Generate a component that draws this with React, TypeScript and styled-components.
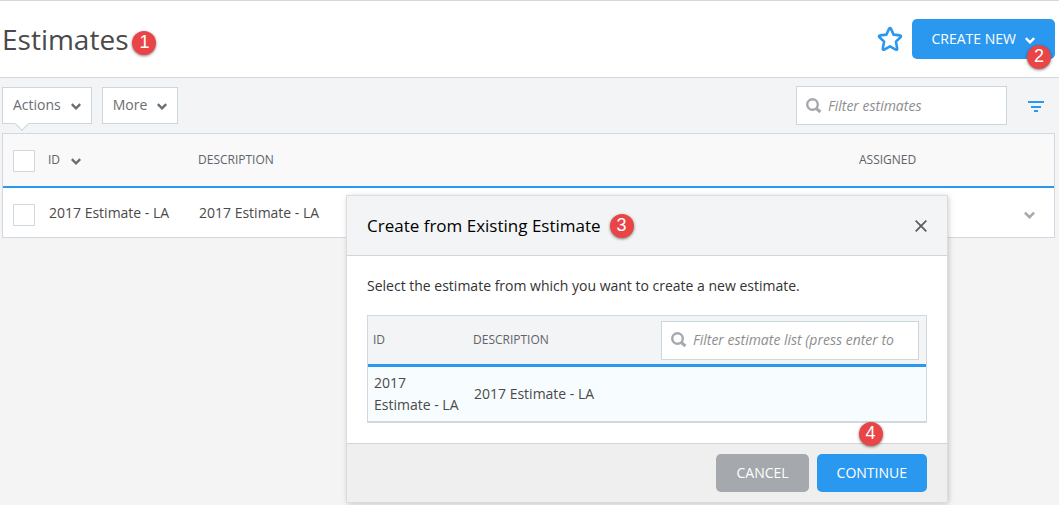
import React from "react";
import styled, { createGlobalStyle, css } from "styled-components";

const GlobalStyle = createGlobalStyle`
  *, *::before, *::after { box-sizing: border-box; }
  body {
    margin: 0;
    background: #f4f4f4;
    color: #4a4a4a;
    font: 14px/22px "Open Sans", "Noto Sans", sans-serif;
  }
  button, input { font: inherit; color: inherit; }
`;

const blue = "#2b98f0";
const line = "#d1d8e0";
const fieldLine = "#c9d7de";

const Page = styled.div`
  position: relative;
  min-height: 100vh;
  border-top: 1px solid ${line};
`;

const PageHeader = styled.header`
  display: flex;
  align-items: center;
  justify-content: space-between;
  height: 77px;
  padding: 0 4px 0 2px;
  background: #fff;
  border-bottom: 1px solid ${line};
`;

const Group = styled.div<{ $gap?: number; $align?: string }>`
  display: flex;
  align-items: ${({ $align = "center" }) => $align};
  gap: ${({ $gap = 10 }) => $gap}px;
`;

const PageTitle = styled.h1`
  margin: 0;
  font-size: 28px;
  line-height: 32px;
  font-weight: 400;
`;

const Badge = styled.span<{ $overlay?: "corner" | "above" }>`
  flex: none;
  width: 24px;
  height: 24px;
  border-radius: 50%;
  background: #e94547;
  box-shadow: 0 1px 3px rgba(0, 0, 0, 0.5);
  color: #fff;
  font: 18px/23px "Liberation Sans", Arial, sans-serif;
  text-align: center;
  ${({ $overlay }) =>
    $overlay === "corner" &&
    css`
      position: absolute;
      right: 4px;
      bottom: -10px;
    `}
  ${({ $overlay }) =>
    $overlay === "above" &&
    css`
      position: absolute;
      left: 42px;
      top: -32px;
    `}
`;

const IconButton = styled.button`
  display: inline-flex;
  padding: 0;
  border: 0;
  background: none;
  cursor: pointer;
`;

const ActionButton = styled.button<{ $tone?: "muted"; $tall?: boolean }>`
  position: relative;
  display: inline-flex;
  align-items: center;
  gap: 9px;
  height: ${({ $tall }) => ($tall ? 40 : 38)}px;
  padding: 0 20px;
  border: 0;
  border-radius: 5px;
  background: ${({ $tone }) => ($tone ? "#a5a8ac" : blue)};
  color: #fff;
  text-transform: uppercase;
  cursor: pointer;
`;

const Toolbar = styled.div`
  display: flex;
  align-items: center;
  justify-content: space-between;
  height: 55px;
  padding: 0 15px 0 2px;
  background: #f3f4f6;
`;

const MenuButton = styled.button<{ $pointer?: boolean }>`
  position: relative;
  display: inline-flex;
  align-items: center;
  gap: 10px;
  height: 37px;
  padding: 0 10px 2px;
  border: 1px solid ${fieldLine};
  background: #fff;
  color: #6a6d71;
  cursor: pointer;
  ${({ $pointer }) =>
    $pointer &&
    css`
      &::after {
        content: "";
        position: absolute;
        left: 14px;
        bottom: -6px;
        width: 10px;
        height: 10px;
        border: solid ${fieldLine};
        border-width: 0 1px 1px 0;
        background: #fff;
        transform: rotate(45deg);
      }
    `}
`;

const SearchBox = styled.label<{ $width: number }>`
  display: flex;
  align-items: center;
  gap: 6px;
  width: ${({ $width }) => $width}px;
  height: 39px;
  padding: 0 15px 0 9px;
  border: 1px solid ${fieldLine};
  background: #fff;
  svg { flex: none; }
`;

const SearchInput = styled.input`
  flex: 1;
  min-width: 0;
  padding: 0;
  border: 0;
  outline: 0;
  background: none;
  font-weight: 400;
  text-transform: none;
  &::placeholder { color: #8e8e8e; font-style: italic; opacity: 1; }
`;

const ListArea = styled.main`
  padding: 0 4px 0 2px;
`;

const Table = styled.table`
  width: 100%;
  table-layout: fixed;
  border-collapse: separate;
  border-spacing: 0;
  border: 1px solid ${line};
  background: #fff;
`;

const HeadCell = styled.th`
  height: 54px;
  padding: 0 5px;
  border-bottom: 2px solid ${blue};
  background: #f9f9f9;
  color: #606367;
  font-size: 12px;
  line-height: 22px;
  font-weight: 500;
  text-align: left;
  text-transform: uppercase;
`;

const Cell = styled.td`
  height: 49px;
  padding: 0 6px;
`;

const CheckCell = styled(Cell)`
  padding: 4px 0 0 10px;
`;

const CheckHeadCell = styled(HeadCell)`
  padding: 2px 0 0 10px;
`;

const MenuCell = styled(Cell)`
  text-align: right;
  padding: 4px 18px 0 0;
`;

const Checkbox = styled.input.attrs({ type: "checkbox" })`
  display: block;
  appearance: none;
  width: 22px;
  height: 22px;
  margin: 0;
  border: 1px solid ${line};
  background: #fff;
`;

const SortButton = styled(IconButton)`
  align-items: center;
  gap: 11px;
  text-transform: uppercase;
`;

const Dialog = styled.section`
  position: absolute;
  top: 195px;
  right: 112px;
  width: 600px;
  background: #fff;
  box-shadow: 0 0 0 1px #dcdcdc, 1px 1px 6px rgba(0, 0, 0, 0.25);
`;

const DialogHeader = styled.header`
  display: flex;
  align-items: center;
  justify-content: space-between;
  height: 60px;
  padding: 0 20px;
  border-bottom: 1px solid #d2d4d6;
  background: #f3f4f6;
`;

const DialogTitle = styled.h2`
  margin: 0;
  color: #000;
  font-size: 17px;
  line-height: 22px;
  font-weight: 400;
`;

const DialogBody = styled.div`
  padding: 19px 20px 20px;
`;

const Prompt = styled.p`
  margin: 0 0 18px;
  color: #333;
`;

const PickTable = styled(Table)`
  border-bottom-width: 2px;
  ${HeadCell} {
    height: 51px;
    border-bottom-width: 3px;
    background: #f3f4f6;
  }
  ${Cell} {
    height: 54px;
    padding: 5px 6px;
    background: #f7fcff;
  }
`;

const HeadSplit = styled.div`
  display: flex;
  align-items: center;
  justify-content: space-between;
  padding-right: 2px;
  ${SearchInput} { font-size: 14px; }
`;

const DialogFooter = styled.footer`
  position: relative;
  display: flex;
  justify-content: flex-end;
  gap: 8px;
  padding: 10px 20px;
  border-top: 1px solid #d2d4d6;
  background: #efefef;
`;

const Chevron = ({ color = "#6a6d71", large }: { color?: string; large?: boolean }) => (
  <svg width={large ? 13 : 10} height={large ? 13 : 12} viewBox={large ? "0 0 12 12" : "1 0 10 12"} aria-hidden="true">
    <path d="M1.8 5.200 6 9.300l4.200-4.100" fill="none" stroke={color} strokeWidth="2.4" />
  </svg>
);

const Search = () => (
  <svg width="16" height="16" viewBox="0 0 16 16" fill="none" stroke="#a5a8ac" aria-hidden="true">
    <circle cx="6.500" cy="6.500" r="5.300" strokeWidth="2.400" />
    <path d="m10.400 10.600 4 3.400" strokeWidth="3" />
  </svg>
);

const Star = () => (
  <svg width="26" height="26" viewBox="0 0 26 26" aria-hidden="true">
    <path
      d="M12 2.9q1-1.7 2 0l2.6 5.7 6.4.8q1.7.4.5 1.8l-4.6 4.4 1.3 6.8q.1 1.9-1.5 1.2L13 20.3l-5.7 3.3q-1.6.7-1.5-1.2l1.3-6.8-4.6-4.4Q1.300 9.800 3 9.400l6.400-.800z"
      fill="none"
      stroke={blue}
      strokeWidth="2.6"
      strokeLinejoin="round"
    />
  </svg>
);

const FilterLines = () => (
  <svg width="16" height="12" viewBox="0 0 16 12" fill={blue} aria-hidden="true">
    <path d="M0 1h16v2H0zM3 6h10v2H3zM6 10h4v2H6z" />
  </svg>
);

const Close = () => (
  <svg width="12" height="12" viewBox="0 0 12 12" aria-hidden="true">
    <path d="m.7.7 10.6 10.6M11.3.7.7 11.3" stroke="#5a5a5a" strokeWidth="1.7" />
  </svg>
);

const estimates = [{ id: "2017 Estimate - LA", description: "2017 Estimate - LA" }];

export default function App() {
  return (
    <>
      <GlobalStyle />
      <Page>
        <PageHeader>
          <Group $gap={4} $align="flex-end">
            <PageTitle>Estimates</PageTitle>
            <Badge>1</Badge>
          </Group>
          <Group $gap={9}>
            <IconButton aria-label="Add to favorites">
              <Star />
            </IconButton>
            <ActionButton $tall>
              Create new
              <Chevron color="#fff" />
              <Badge $overlay="corner">2</Badge>
            </ActionButton>
          </Group>
        </PageHeader>

        <Toolbar>
          <Group>
            <MenuButton $pointer>
              Actions
              <Chevron />
            </MenuButton>
            <MenuButton>
              More
              <Chevron />
            </MenuButton>
          </Group>
          <Group $gap={21}>
            <SearchBox $width={211}>
              <Search />
              <SearchInput placeholder="Filter estimates" aria-label="Filter estimates" />
            </SearchBox>
            <IconButton aria-label="Filters">
              <FilterLines />
            </IconButton>
          </Group>
        </Toolbar>

        <ListArea>
          <Table>
            <colgroup>
              <col style={{ width: 40 }} />
              <col style={{ width: 150 }} />
              <col />
              <col style={{ width: 150 }} />
              <col style={{ width: 50 }} />
            </colgroup>
            <thead>
              <tr>
                <CheckHeadCell>
                  <Checkbox aria-label="Select all estimates" />
                </CheckHeadCell>
                <HeadCell>
                  <SortButton>
                    ID
                    <Chevron />
                  </SortButton>
                </HeadCell>
                <HeadCell>Description</HeadCell>
                <HeadCell>Assigned</HeadCell>
                <HeadCell />
              </tr>
            </thead>
            <tbody>
              {estimates.map((row) => (
                <tr key={row.id}>
                  <CheckCell>
                    <Checkbox aria-label={`Select ${row.id}`} />
                  </CheckCell>
                  <Cell>{row.id}</Cell>
                  <Cell>{row.description}</Cell>
                  <Cell />
                  <MenuCell>
                    <IconButton aria-label="Row actions">
                      <Chevron color="#a5a8ac" large />
                    </IconButton>
                  </MenuCell>
                </tr>
              ))}
            </tbody>
          </Table>
        </ListArea>

        <Dialog role="dialog" aria-labelledby="dialog-title">
          <DialogHeader>
            <Group $gap={9}>
              <DialogTitle id="dialog-title">Create from Existing Estimate</DialogTitle>
              <Badge>3</Badge>
            </Group>
            <IconButton aria-label="Close">
              <Close />
            </IconButton>
          </DialogHeader>
          <DialogBody>
            <Prompt>Select the estimate from which you want to create a new estimate.</Prompt>
            <PickTable>
              <colgroup>
                <col style={{ width: 100 }} />
                <col />
              </colgroup>
              <thead>
                <tr>
                  <HeadCell>ID</HeadCell>
                  <HeadCell>
                    <HeadSplit>
                      Description
                      <SearchBox $width={258}>
                        <Search />
                        <SearchInput
                          placeholder="Filter estimate list (press enter to"
                          aria-label="Filter estimate list"
                        />
                      </SearchBox>
                    </HeadSplit>
                  </HeadCell>
                </tr>
              </thead>
              <tbody>
                {estimates.map((row) => (
                  <tr key={row.id}>
                    <Cell>{row.id}</Cell>
                    <Cell>{row.description}</Cell>
                  </tr>
                ))}
              </tbody>
            </PickTable>
          </DialogBody>
          <DialogFooter>
            <ActionButton $tone="muted">Cancel</ActionButton>
            <ActionButton>
              Continue
              <Badge $overlay="above">4</Badge>
            </ActionButton>
          </DialogFooter>
        </Dialog>
      </Page>
    </>
  );
}
